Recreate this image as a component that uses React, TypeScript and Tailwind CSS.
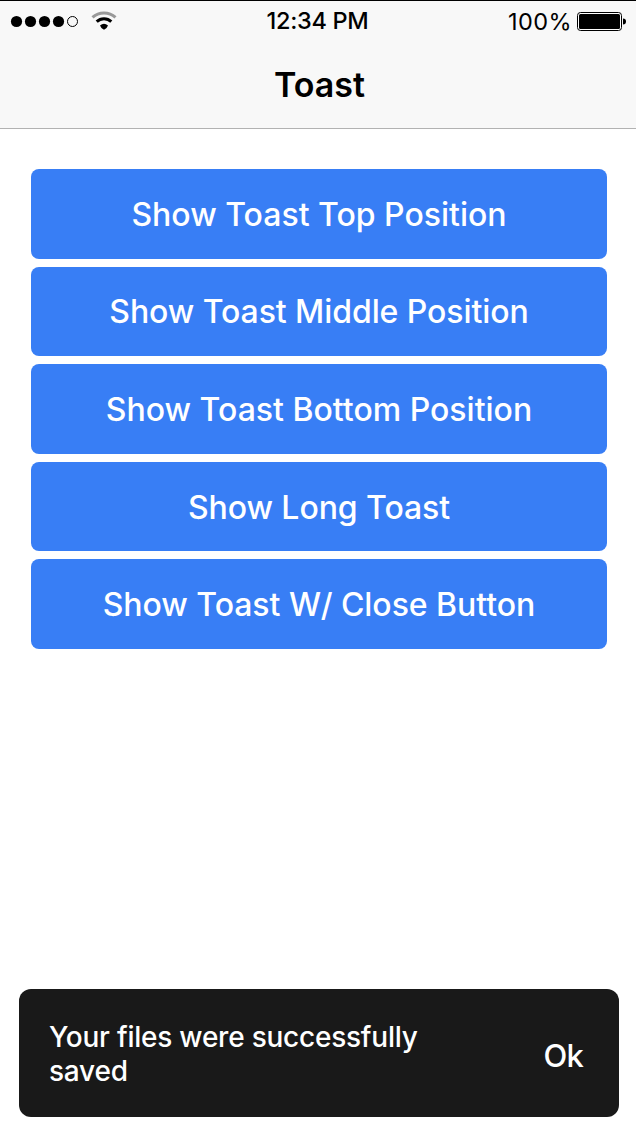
const buttons = [
  { text: 'Show Toast Top Position', style: 'h-[90px] pt-[2px]' },
  { text: 'Show Toast Middle Position', style: 'h-[89px] tracking-[-0.08px]' },
  { text: 'Show Toast Bottom Position', style: 'h-[90px] pt-[2px]' },
  { text: 'Show Long Toast', style: 'h-[89px] pt-[3px] tracking-[-0.06px]' },
  { text: 'Show Toast W/ Close Button', style: 'h-[90px] pt-[2px] tracking-[-0.04px]' },
];

export default function App() {
  return (
    <div className="flex h-[1132px] w-[636px] flex-col bg-white font-['Inter',sans-serif] text-black">
      <header className="h-[129px] border-t border-b border-t-black border-b-[#b2b2b2] bg-[#f8f8f8]">
        <div className="grid h-10 grid-cols-3 items-center text-[23.5px]">
          <div className="flex items-center pl-[10px]">
            <svg width="110" height="24" viewBox="0 0 110 24">
              <circle cx="6.5" cy="12.5" r="5.6" />
              <circle cx="20.5" cy="12.5" r="5.6" />
              <circle cx="34.5" cy="12.5" r="5.6" />
              <circle cx="48.5" cy="12.5" r="5.6" />
              <circle cx="62.5" cy="12.5" r="5" fill="none" stroke="black" />
              <path d="M82.5 8.4A17 17 0 0 1 105.5 8.4" fill="none" stroke="#999" strokeWidth="3" />
              <path d="M86.7 12.7A10.5 10.5 0 0 1 101.3 12.7" fill="none" stroke="black" strokeWidth="3" />
              <path d="M90 16.4Q94 13.3 98 16.4Q97 19.5 94 20.8Q91 19.5 90 16.4Z" />
            </svg>
          </div>
          <div className="pr-px text-center font-medium tracking-[-0.3px]">12:34 PM</div>
          <div className="flex items-center justify-end pt-px pr-[10px]">
            <span className="mr-[5px] tracking-[0.4px]">100%</span>
            <svg width="49" height="20" viewBox="0 0 49 20">
              <rect x=".5" y=".5" width="44" height="18" rx="3" fill="white" stroke="black" />
              <rect x="2" y="2" width="41" height="15" rx="1.5" />
              <path d="M46 6.5Q49 6.5 49 9.5Q49 12.5 46 12.5Z" />
            </svg>
          </div>
        </div>
        <h1 className="flex h-[86px] items-center justify-center pl-[3px] text-[34px] font-semibold tracking-[-0.05px]">Toast</h1>
      </header>
      <main className="flex flex-1 flex-col gap-2 pt-10 pr-[29px] pl-[31px]">
        {buttons.map(b => (
          <button key={b.text} className={`${b.style} shrink-0 rounded-lg bg-[#387ef5] text-[32px] font-medium text-white`}>{b.text}</button>
        ))}
      </main>
      <aside className="mr-[17px] mb-[15px] ml-[19px] flex h-32 items-center justify-between rounded-xl bg-[#191919] pr-9 pl-[30px] font-medium text-white">
        <p className="pt-[2px] text-[28px] leading-[34px] tracking-[-0.23px]">Your files were successfully<br />saved</p>
        <button className="pt-[6px] text-[31px] tracking-[-0.8px]">Ok</button>
      </aside>
    </div>
  );
}
